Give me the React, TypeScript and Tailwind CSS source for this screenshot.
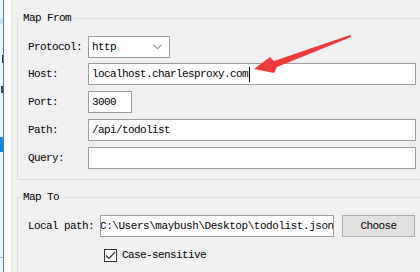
import React from "react";

const mono = "font-['Liberation_Mono','DejaVu_Sans_Mono',monospace] text-[11px] tracking-[-0.6px] text-black";

function Field({ className = "", children }: { className?: string; children?: React.ReactNode }) {
  return (
    <div
      className={`flex h-[22px] items-center overflow-hidden whitespace-nowrap border border-[#9c9c9c] bg-white pl-[3px] ${className}`}
    >
      {children}
    </div>
  );
}

function Row({ label, children, className = "" }: { label: string; children: React.ReactNode; className?: string }) {
  return (
    <div className={`flex h-[22px] items-center ${className}`}>
      <span className="w-[60px] shrink-0">{label}</span>
      {children}
    </div>
  );
}

function Chevron() {
  return (
    <svg width="9" height="6" viewBox="0 0 9 6" className="ml-auto mr-[7px]">
      <path d="M0.5 0.8 L4.5 4.8 L8.5 0.8" fill="none" stroke="#606060" strokeWidth="1" />
    </svg>
  );
}

function Arrow() {
  return (
    <svg
      className="pointer-events-none absolute left-0 top-0"
      width="420"
      height="272"
      viewBox="0 0 420 272"
      aria-hidden
    >
      <polygon
        points="254,69 270,57 274,61 350,35 351,37 277,67 274,73"
        fill="#ee3a3a"
      />
    </svg>
  );
}

export default function App() {
  return (
    <div className={`relative flex h-[272px] w-[420px] overflow-hidden bg-[#f0f0f0] ${mono}`}>
      {/* left pane sliver */}
      <div className="flex w-[12px] shrink-0">
        <div className="flex w-[3px] flex-col bg-[#f4f4f4]">
          <div className="mt-[18px] h-[6px] bg-[#cfe0f0]" />
          <div className="mt-[31px] h-[8px] w-px self-end bg-[#333]" />
          <div className="mt-[23px] h-[7px] w-[2px] self-end bg-[#444]" />
          <div className="mt-[44px] h-[15px] bg-[#1e7fd4]" />
          <div className="mt-[105px] h-px bg-[#b0b0b0]" />
        </div>
        <div className="w-px bg-[#2b87d3]" />
        <div className="w-[8px] border-r border-[#e2e2e2] bg-white" />
      </div>

      <div className="flex-1">
        <fieldset className="ml-[5px] mt-[11px] w-[430px] border border-[#dcdcdc] pb-[10px] pl-[10px] pt-[11px]">
          <legend className="-ml-[6px] pl-[1px] pr-[3px] leading-[14px]">Map From</legend>
          <Row label="Protocol:">
            <Field className="w-[82px]">
              <span>http</span>
              <Chevron />
            </Field>
          </Row>
          <Row label="Host:" className="mt-[5px]">
            <Field className="w-[328px]">
              <span>localhost.charlesproxy.com</span>
              <span className="ml-[1px] inline-block h-[15px] w-px bg-black" />
            </Field>
          </Row>
          <Row label="Port:" className="mt-[6px]">
            <Field className="w-[44px]">3000</Field>
          </Row>
          <Row label="Path:" className="mt-[6px]">
            <Field className="w-[328px]">/api/todolist</Field>
          </Row>
          <Row label="Query:" className="mt-[6px]">
            <Field className="w-[328px]" />
          </Row>
        </fieldset>

        <fieldset className="ml-[5px] mt-[10px] h-[120px] w-[430px] border border-[#dcdcdc] pl-[10px] pt-[11px]">
          <legend className="-ml-[6px] pl-[1px] pr-[3px] leading-[14px]">Map To</legend>
          <div className="flex h-[22px] items-center">
            <span className="w-[72px] shrink-0">Local path:</span>
            <Field className="w-[234px] pl-0">
              <span className="-ml-[4px] tracking-[-0.45px]">C:\Users\maybush\Desktop\todolist.json</span>
            </Field>
            <button className="ml-[8px] flex h-[22px] w-[73px] items-center justify-center border border-[#adadad] bg-[#e1e1e1]">
              Choose
            </button>
          </div>
          <div className="ml-[76px] mt-[11px] flex h-[14px] items-center">
            <span className="flex h-[13px] w-[13px] items-center justify-center border border-[#333] bg-white">
              <svg width="11" height="9" viewBox="0 0 11 9">
                <path d="M1 4.5 L4 7.5 L10 1" fill="none" stroke="#333" strokeWidth="1.2" />
              </svg>
            </span>
            <span className="ml-[5px]">Case-sensitive</span>
          </div>
        </fieldset>
      </div>

      <Arrow />
    </div>
  );
}
